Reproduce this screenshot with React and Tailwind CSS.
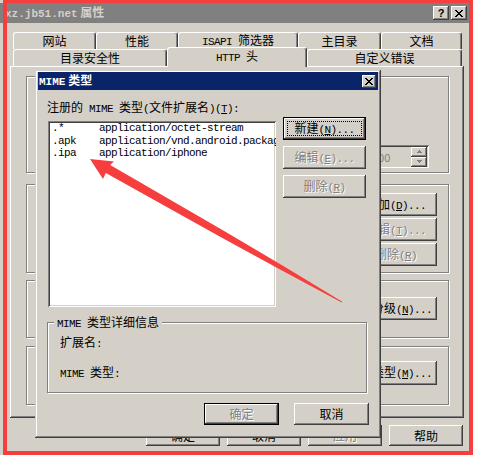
import React from "react";

const RAISED =
  "shadow-[inset_-1px_-1px_0_#404040,inset_1px_1px_0_#ffffff,inset_-2px_-2px_0_#808080]";
const SUNKEN =
  "shadow-[inset_1px_1px_0_#808080,inset_-1px_-1px_0_#ffffff,inset_2px_2px_0_#404040,inset_-2px_-2px_0_#d4d0c8]";
const DIS = "text-[#808080] [text-shadow:1px_1px_0_#ffffff]";
const ETCH =
  "border border-[#808080] shadow-[1px_1px_0_#ffffff,inset_1px_1px_0_#ffffff]";

function M({ children, b }) {
  return (
    <span
      className={
        b
          ? "font-['Liberation_Mono',monospace] text-[11px] font-bold"
          : "font-['Liberation_Mono',monospace] text-[11px] tracking-[-0.6px]"
      }
    >
      {children}
    </span>
  );
}

const XGLYPH = [
  [0, 0, 2], [6, 0, 2], [1, 1, 2], [5, 1, 2], [2, 2, 4], [3, 3, 2],
  [2, 4, 4], [1, 5, 2], [5, 5, 2], [0, 6, 2], [6, 6, 2],
];
function XIcon() {
  return (
    <svg width="8" height="7" shapeRendering="crispEdges">
      {XGLYPH.map(([x, y, w], i) => (
        <rect key={i} x={x} y={y} width={w} height={1} fill="#000" />
      ))}
    </svg>
  );
}

function Btn({ className = "", children, disabled, def, focus }) {
  return (
    <div
      className={`relative flex items-center justify-center bg-[#d4d0c8] whitespace-nowrap ${
        def ? "border border-black" : ""
      } ${RAISED} ${disabled ? DIS : ""} ${className}`}
    >
      {focus && (
        <div className="absolute inset-[3px] border border-dotted border-black" />
      )}
      <span className="leading-[14px]">{children}</span>
    </div>
  );
}

function Tab({ className = "", children }) {
  return (
    <div
      className={`h-[17px] flex items-center justify-center rounded-t-[3px] border-l border-t border-r border-l-white border-t-white border-r-[#404040] shadow-[inset_-1px_0_0_#808080] bg-[#d4d0c8] whitespace-nowrap leading-[14px] ${className}`}
    >
      <span>{children}</span>
    </div>
  );
}

function Arrow() {
  return (
    <svg
      className="absolute left-0 top-0 pointer-events-none"
      width="478"
      height="458"
      viewBox="0 0 478 458"
    >
      <polygon
        fill="#f73e3e"
        points="90,159 114,161.5 110.2,165.1 226.7,232.5 284.6,266.8 342.3,301.7 341.7,302.4 282.4,270.7 223.3,238.5 105.8,172.9 103,179"
      />
    </svg>
  );
}

function SpinArrow({ up }) {
  return (
    <svg width="5" height="3" shapeRendering="crispEdges">
      {up ? (
        <>
          <rect x="2" y="0" width="1" height="1" fill="#808080" />
          <rect x="1" y="1" width="3" height="1" fill="#808080" />
          <rect x="0" y="2" width="5" height="1" fill="#808080" />
        </>
      ) : (
        <>
          <rect x="0" y="0" width="5" height="1" fill="#808080" />
          <rect x="1" y="1" width="3" height="1" fill="#808080" />
          <rect x="2" y="2" width="1" height="1" fill="#808080" />
        </>
      )}
    </svg>
  );
}

const ROWS = [
  [".*", "application/octet-stream"],
  [".apk", "application/vnd.android.package-archive"],
  [".ipa", "application/iphone"],
];

function Dialog() {
  return (
    <div className="absolute left-[35px] top-[70px] w-[346px] h-[368px] bg-[#d4d0c8] shadow-[inset_-1px_-1px_0_#404040,inset_1px_1px_0_#d4d0c8,inset_-2px_-2px_0_#808080,inset_2px_2px_0_#ffffff] px-[3px] pt-[2px] flex flex-col">
      <div className="h-[18px] bg-[#0a246a] flex items-center pl-[1px] pr-[2px] text-white font-bold">
        <span className="leading-[14px]">
          <M b>MIME</M> 类型
        </span>
        <div className={`ml-auto w-[14px] h-[13px] bg-[#d4d0c8] flex items-center justify-center ${RAISED}`}>
          <XIcon />
        </div>
      </div>

      <div className="flex pl-[9px] pt-[11px]">
        <div className="w-[229px] flex flex-col">
          <div className="h-[12px] leading-[12px] whitespace-nowrap">
            注册的<M> MIME </M>类型<M>(</M>文件扩展名<M>)(<u>T</u>):</M>
          </div>
          <div className={`mt-[8px] ml-[1px] w-[228px] h-[186px] bg-white ${SUNKEN} px-[4px] pt-[1px] overflow-hidden whitespace-nowrap font-['Liberation_Mono',monospace] text-[11px] tracking-[-0.6px] leading-[12.5px]`}>
            {ROWS.map(([e, t]) => (
              <div key={e} className="h-[12.5px] flex">
                <span className="w-[47px] shrink-0">{e}</span>
                <span>{t}</span>
              </div>
            ))}
          </div>
        </div>
        <div className="ml-[7px] pt-[16px] flex flex-col gap-[6px]">
          <Btn className="w-[83px] h-[23px]" def focus>
            新建<M>(<u>N</u>)...</M>
          </Btn>
          <Btn className="w-[83px] h-[23px]" disabled>
            编辑<M>(<u>E</u>)...</M>
          </Btn>
          <Btn className="w-[83px] h-[23px]" disabled>
            删除<M>(<u>R</u>)</M>
          </Btn>
        </div>
      </div>

      <div className={`relative ml-[9px] mt-[15px] w-[320px] h-[71px] ${ETCH} pl-[12px] pt-[13px] flex flex-col`}>
        <div className="absolute -top-[7px] left-[6px] px-[3px] bg-[#d4d0c8] leading-[12px] whitespace-nowrap">
          <M>MIME </M>类型详细信息
        </div>
        <div className="leading-[12px]">
          扩展名<M>:</M>
        </div>
        <div className="leading-[12px] mt-[16px]">
          <M>MIME </M>类型<M>:</M>
        </div>
      </div>

      <div className="mt-[10px] flex justify-end gap-[15px] pr-[9px]">
        <Btn className="w-[75px] h-[22px]" def disabled>
          确定
        </Btn>
        <Btn className="w-[75px] h-[22px]">取消</Btn>
      </div>
    </div>
  );
}

export default function App() {
  return (
    <div className="relative w-[478px] h-[458px] bg-white overflow-hidden text-[12px] leading-[14px] text-black font-['Noto_Sans_CJK_SC',sans-serif]">
      <div className="w-[473px] h-[455px] bg-[#d4d0c8] pt-[3px] flex flex-col">
        {/* title bar */}
        <div className="h-[20px] bg-[#808080] flex items-center pl-[5px] pr-[6px]">
          <span className="font-bold text-[#d4d0c8] whitespace-nowrap">
            <M b>xz.jb51.net</M> 属性
          </span>
          <div className="ml-auto flex gap-[2px]">
            <div className={`w-[16px] h-[14px] bg-[#d4d0c8] flex items-center justify-center font-bold text-[11px] font-['Liberation_Sans',sans-serif] ${RAISED}`}>
              ?
            </div>
            <div className={`w-[16px] h-[14px] bg-[#d4d0c8] flex items-center justify-center ${RAISED}`}>
              <XIcon />
            </div>
          </div>
        </div>

        {/* tabs + panel */}
        <div className="pl-[10px] pt-[9px] flex flex-col">
          <div className="pl-[3px] flex">
            <Tab className="w-[83px]">网站</Tab>
            <Tab className="w-[82px]">性能</Tab>
            <Tab className="w-[120px]">
              <M>ISAPI </M>筛选器
            </Tab>
            <Tab className="w-[83px]">主目录</Tab>
            <Tab className="w-[81px]">文档</Tab>
          </div>
          <div className="pl-[3px] flex items-end h-[17px]">
            <Tab className="w-[154px]">目录安全性</Tab>
            <div className="relative z-10 w-[140px] h-[20px] -mb-[1px] rounded-t-[3px] border-l border-t border-r border-l-white border-t-white border-r-[#404040] shadow-[inset_-1px_0_0_#808080] bg-[#d4d0c8] flex items-center justify-center pb-[2px] leading-[14px]">
              <span>
                <M>HTTP </M>头
              </span>
            </div>
            <Tab className="w-[155px]">自定义错误</Tab>
          </div>

          <div className={`w-[454px] h-[352px] ${RAISED} pl-[16px] pt-[10px] flex flex-col`}>
            <div className={`w-[423px] h-[97px] ${ETCH} flex flex-col items-end pr-[19px] pt-[68px]`}>
              <div className={`w-[90px] h-[23px] ${SUNKEN} flex items-center pl-[33px] pr-[2px]`}>
                <span className="text-[#808080] text-[11px]">100</span>
                <div className="ml-auto flex flex-col">
                  <div className={`w-[16px] h-[10px] bg-[#d4d0c8] ${RAISED} flex items-center justify-center`}>
                    <SpinArrow up />
                  </div>
                  <div className={`w-[16px] h-[10px] bg-[#d4d0c8] ${RAISED} flex items-center justify-center`}>
                    <SpinArrow />
                  </div>
                </div>
              </div>
            </div>

            <div className={`mt-[11px] w-[423px] h-[89px] ${ETCH} flex flex-col items-end pr-[11px] pt-[8px] gap-[2px]`}>
              <Btn className="w-[82px] h-[23px]">
                添加<M>(<u>D</u>)...</M>
              </Btn>
              <Btn className="w-[82px] h-[23px]" disabled>
                编辑<M>(<u>T</u>)...</M>
              </Btn>
              <Btn className="w-[82px] h-[23px]" disabled>
                删除<M>(<u>R</u>)</M>
              </Btn>
            </div>

            <div className={`mt-[7px] w-[423px] h-[58px] ${ETCH} flex flex-col items-end pr-[11px] pt-[16px]`}>
              <Btn className="w-[94px] h-[23px]">
                编辑分级<M>(<u>N</u>)...</M>
              </Btn>
            </div>

            <div className={`mt-[8px] w-[423px] h-[59px] ${ETCH} flex flex-col items-end pr-[11px] pt-[14px]`}>
              <Btn className="w-[100px] h-[24px]">
                <M>MIME </M>类型<M>(<u>M</u>)...</M>
              </Btn>
            </div>
          </div>
        </div>

        {/* bottom buttons */}
        <div className="mt-[7px] flex justify-end gap-[7px] pr-[10px]">
          <Btn className="w-[74px] h-[21px]">确定</Btn>
          <Btn className="w-[74px] h-[21px]">取消</Btn>
          <Btn className="w-[74px] h-[21px]" disabled>
            应用
          </Btn>
          <Btn className="w-[74px] h-[21px]">帮助</Btn>
        </div>
      </div>

      <Dialog />
      <Arrow />

      <div className="absolute left-[3px] top-0 w-[470px] h-[455px] border-l-[4px] border-r-[4px] border-b-[4px] border-t-[3px] border-[#f63e3e] pointer-events-none" />
    </div>
  );
}
